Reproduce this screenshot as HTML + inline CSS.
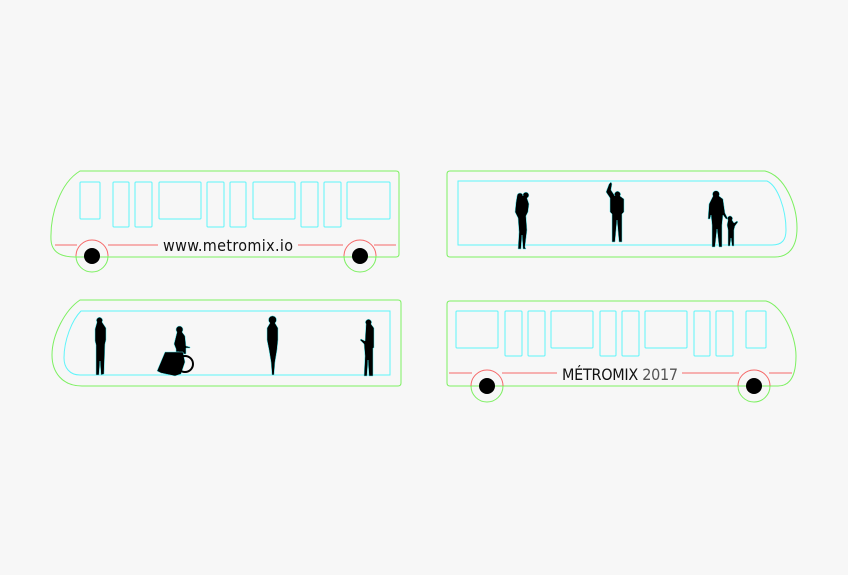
<!DOCTYPE html>
<html><head><meta charset="utf-8"><style>
html,body{margin:0;padding:0;background:#f7f7f7;}
svg{display:block}
text{font-family:"Liberation Sans Narrow","DejaVu Sans Condensed","Liberation Sans",sans-serif;}
</style></head><body>
<svg width="848" height="575" viewBox="0 0 848 575" xmlns="http://www.w3.org/2000/svg">
<rect width="848" height="575" fill="#f7f7f7"/>
<g fill="none" stroke-width="1">
<!-- Bus 1 -->
<path d="M80,171 L396,171 Q399,171 399,174 L399,254 Q399,257 396,257 L75,257 Q52,257 51,240 C50,215 60,183 80,171 Z" stroke="#7cf060"/>
<g stroke="#5ef4fa">
<rect x="80" y="182" width="20" height="37" rx="1"/>
<rect x="113" y="182" width="16" height="45" rx="1"/>
<rect x="135" y="182" width="17" height="45" rx="1"/>
<rect x="159" y="182" width="42" height="37" rx="1"/>
<rect x="207" y="182" width="17" height="45" rx="1"/>
<rect x="230" y="182" width="16" height="45" rx="1"/>
<rect x="253" y="182" width="42" height="37" rx="1"/>
<rect x="301" y="182" width="17" height="45" rx="1"/>
<rect x="324" y="182" width="17" height="45" rx="1"/>
<rect x="347" y="182" width="43" height="37" rx="1"/>
</g>
<g stroke="#f56868"><path d="M55,245H77M108,245H158M298,245H343M374,245H396"/>
<path d="M76,256 A16,16 0 0 1 108,256"/><path d="M344,256 A16,16 0 0 1 376,256"/></g>
<g stroke="#7cf060"><path d="M76,256 A16,16 0 0 0 108,256"/><path d="M344,256 A16,16 0 0 0 376,256"/></g>
<!-- Bus 4 -->
<path d="M450,301 L766,301 C782,305 796,335 796,356 C796,376 790,386 778,386 L450,386 Q447,386 447,383 L447,304 Q447,301 450,301 Z" stroke="#7cf060"/>
<g stroke="#5ef4fa">
<rect x="456" y="311" width="42" height="37" rx="1"/>
<rect x="505" y="311" width="17" height="45" rx="1"/>
<rect x="528" y="311" width="17" height="45" rx="1"/>
<rect x="551" y="311" width="42" height="37" rx="1"/>
<rect x="600" y="311" width="16" height="45" rx="1"/>
<rect x="622" y="311" width="17" height="45" rx="1"/>
<rect x="645" y="311" width="42" height="37" rx="1"/>
<rect x="694" y="311" width="16" height="45" rx="1"/>
<rect x="716" y="311" width="17" height="45" rx="1"/>
<rect x="746" y="311" width="20" height="37" rx="1"/>
</g>
<g stroke="#f56868"><path d="M449,373H472M502,373H557M682,373H739M769,373H792"/>
<path d="M471,386 A16,16 0 0 1 503,386"/><path d="M738,386 A16,16 0 0 1 770,386"/></g>
<g stroke="#7cf060"><path d="M471,386 A16,16 0 0 0 503,386"/><path d="M738,386 A16,16 0 0 0 770,386"/></g>
<!-- Bus 2 -->
<path d="M450,171 L765,171 C785,176 797,205 797,228 C797,248 788,257 775,257 L450,257 Q447,257 447,254 L447,174 Q447,171 450,171 Z" stroke="#7cf060"/>
<path d="M458,181 L767,181 C778,186 786,210 786,230 C786,240 782,245 772,245 L458,245 Z" stroke="#5ef4fa"/>
<!-- Bus 3 -->
<path d="M80,300 L398,300 Q401,300 401,303 L401,383 Q401,386 398,386 L82,386 C62,386 52,372 52,355 C52,335 65,310 80,300 Z" stroke="#7cf060"/>
<path d="M81,311 L390,311 L390,375 L80,375 C70,375 64,368 64,358 C64,340 72,320 81,311 Z" stroke="#5ef4fa"/>
</g>
<g fill="#000">
<circle cx="92" cy="256" r="8"/><circle cx="360" cy="256" r="8"/>
<circle cx="487" cy="386" r="8"/><circle cx="754" cy="386" r="8"/>
</g>
<text x="163" y="251" font-size="16" textLength="130" lengthAdjust="spacing" fill="#111">www.metromix.io</text>
<text x="562" y="380" font-size="16" textLength="116" lengthAdjust="spacing" fill="#111">MÉTROMIX <tspan fill="#555">2017</tspan></text>
<!-- people -->
<g fill="#000" stroke="#4fe9ee" stroke-width="0.5">
<path d="M517,196 a3,3 0 1 1 6,0 a3,3 0 1 1 4,2 l2,6 -1,8 -2,4 1,14 -2,17 1,2 -3,0 -1,-14 -1,14 -3,0 1,-17 -1,-14 -3,-6 1,-10 z"/>
<path d="M609,184 l2,-2 1,2 -1,6 4,6 a3,3 0 1 1 5,0 l4,3 0,13 -2,2 0,28 -3,0 -2,-22 -2,22 -3,0 0,-28 -2,-2 0,-14 -4,-6 z"/>
<path d="M713,196 a3.5,3.5 0 1 1 6,0 l4,3 2,14 3,6 -2,0 -3,-4 -1,10 0,22 -3,0 -2,-18 -2,18 -3,0 0,-22 -1,-10 -1,4 -2,0 1,-15 z"/>
<path d="M728,220 a2.5,2.5 0 1 1 4,0 l2,3 3,-2 1,1 -3,4 -1,4 0,16 -2,0 -1,-8 -1,8 -2,0 0,-16 -1,-5 z"/>
<path d="M97,322 a3,3 0 1 1 5,0 l4,6 0,12 -1,4 -1,30 -3,1 -1,-14 -1,14 -3,0 0,-30 -1,-4 0,-12 z"/>
<path d="M177,332 a3.5,3.5 0 1 1 5,0 l3,4 1,10 4,1 0,1 -4,0 0,6 -7,0 0,-2 -3,0 0,-3 -2,-5 z"/>
<path d="M165,352 l18,0 2,10 -4,12 -6,2 -14,-3 -4,-2 z"/>
<circle cx="185" cy="364" r="8" fill="none" stroke="#000" stroke-width="2"/>
<path d="M270,323 a4,4 0 1 1 5,0 l3,5 0,12 -1,10 -2,12 -1,13 -2,0 -1,-13 -2,-12 -2,-10 0,-12 z"/>
<path d="M366,324 a3,3 0 1 1 5,0 l3,4 0,20 -1,0 0,28 -4,0 -1,-16 -1,16 -3,0 1,-20 -1,-12 -2,-2 -2,-2 1,-1 4,2 z"/>
</g>
</svg>
</body></html>
